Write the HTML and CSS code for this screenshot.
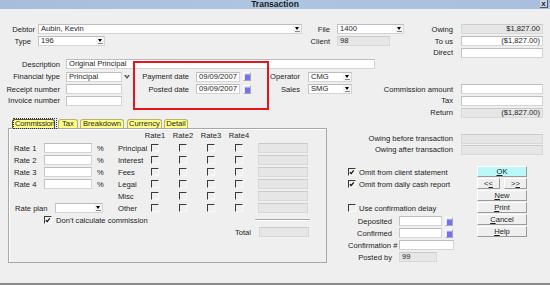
FILE: index.html
```html
<!DOCTYPE html>
<html lang="en">
<head>
  <meta charset="UTF-8">
  <title>Transaction</title>
  <link rel="stylesheet" href="styles.css">
</head>
<body>
<div class="window">

  <!-- Title bar -->
  <div class="titlebar">
    <span class="title">Transaction</span>
    <span class="close">x</span>
  </div>

  <!-- Header fields -->
  <div class="top">
    <div class="row h12">
      <span class="lbl w35">Debtor</span>
      <div class="sel w264 ml3"><span class="val">Aubin, Kevin</span><span class="arr"></span></div>
      <span class="lbl w28">File</span>
      <div class="sel w67 ml7"><span class="val">1400</span><span class="arr"></span></div>
      <span class="lbl w49">Owing</span>
      <div class="fld ro num w82 ml8">$1,827.00</div>
    </div>
    <div class="row h12">
      <span class="lbl w31">Type</span>
      <div class="sel w67 ml7"><span class="val">196</span><span class="arr"></span></div>
      <span class="lbl w225">Client</span>
      <div class="fld ro w53 ml7">98</div>
      <span class="lbl w63">To us</span>
      <div class="fld num w82 ml8">($1,827.00)</div>
    </div>
    <div class="row h11">
      <span class="lbl w453">Direct</span>
      <div class="fld w82 ml8"></div>
    </div>
    <div class="row h12">
      <span class="lbl w60">Description</span>
      <div class="fld w309 ml6">Original Principal</div>
    </div>
    <div class="row h13">
      <span class="lbl w60">Financial type</span>
      <div class="fld w56 ml6">Principal</div>
      <span class="oarr"></span>
      <span class="lbl w57">Payment date</span>
      <div class="fld w44 ml7">09/09/2007</div>
      <span class="cal ml3"></span>
      <span class="lbl w49">Operator</span>
      <div class="sel w44 ml8"><span class="val">CMG</span><span class="arr"></span></div>
    </div>
    <div class="row h12">
      <span class="lbl w60">Receipt number</span>
      <div class="fld w56 ml6"></div>
      <span class="lbl w67">Posted date</span>
      <div class="fld w44 ml7">09/09/2007</div>
      <span class="cal ml3"></span>
      <span class="lbl w49">Sales</span>
      <div class="sel w44 ml8"><span class="val">SMG</span><span class="arr"></span></div>
      <span class="lbl w101">Commission amount</span>
      <div class="fld w82 ml8"></div>
    </div>
    <div class="row h11">
      <span class="lbl w60">Invoice number</span>
      <div class="fld w56 ml6"></div>
      <span class="lbl w331">Tax</span>
      <div class="fld w82 ml8"></div>
    </div>
    <div class="row h13">
      <span class="lbl w453">Return</span>
      <div class="fld ro num w82 ml8">($1,827.00)</div>
    </div>
  </div>

  <div class="lower">
    <!-- Tabbed panel -->
    <div class="tabbox">
      <div class="tabs">
        <span class="tab active t-comm"><span class="focus">Commission</span></span>
        <span class="tab t-tax">Tax</span>
        <span class="tab t-brk">Breakdown</span>
        <span class="tab t-cur">Currency</span>
        <span class="tab t-det">Detail</span>
      </div>
      <div class="panel">
        <div class="hdr">
          <span>Rate1</span><span>Rate2</span><span>Rate3</span><span>Rate4</span>
        </div>
        <div class="prow">
          <div class="pleft"><span class="plbl">Rate 1</span><div class="fld w48"></div><span class="pct">%</span></div>
          <span class="rlbl">Principal</span>
          <span class="cbcell"><span class="cb"></span></span><span class="cbcell"><span class="cb"></span></span><span class="cbcell"><span class="cb"></span></span><span class="cbcell"><span class="cb"></span></span>
          <div class="fld ro w50 ml5"></div>
        </div>
        <div class="prow">
          <div class="pleft"><span class="plbl">Rate 2</span><div class="fld w48"></div><span class="pct">%</span></div>
          <span class="rlbl">Interest</span>
          <span class="cbcell"><span class="cb"></span></span><span class="cbcell"><span class="cb"></span></span><span class="cbcell"><span class="cb"></span></span><span class="cbcell"><span class="cb"></span></span>
          <div class="fld ro w50 ml5"></div>
        </div>
        <div class="prow">
          <div class="pleft"><span class="plbl">Rate 3</span><div class="fld w48"></div><span class="pct">%</span></div>
          <span class="rlbl">Fees</span>
          <span class="cbcell"><span class="cb"></span></span><span class="cbcell"><span class="cb"></span></span><span class="cbcell"><span class="cb"></span></span><span class="cbcell"><span class="cb"></span></span>
          <div class="fld ro w50 ml5"></div>
        </div>
        <div class="prow">
          <div class="pleft"><span class="plbl">Rate 4</span><div class="fld w48"></div><span class="pct">%</span></div>
          <span class="rlbl">Legal</span>
          <span class="cbcell"><span class="cb"></span></span><span class="cbcell"><span class="cb"></span></span><span class="cbcell"><span class="cb"></span></span><span class="cbcell"><span class="cb"></span></span>
          <div class="fld ro w50 ml5"></div>
        </div>
        <div class="prow">
          <div class="pleft"></div>
          <span class="rlbl">Misc</span>
          <span class="cbcell"><span class="cb"></span></span><span class="cbcell"><span class="cb"></span></span><span class="cbcell"><span class="cb"></span></span><span class="cbcell"><span class="cb"></span></span>
          <div class="fld ro w50 ml5"></div>
        </div>
        <div class="prow">
          <div class="pleft plan"><span class="plbl wide">Rate plan</span><div class="sel w48"><span class="val"></span><span class="arr"></span></div></div>
          <span class="rlbl">Other</span>
          <span class="cbcell"><span class="cb"></span></span><span class="cbcell"><span class="cb"></span></span><span class="cbcell"><span class="cb"></span></span><span class="cbcell"><span class="cb"></span></span>
          <div class="fld ro w50 ml5"></div>
        </div>
        <div class="prow nocalc">
          <span class="cb checked"><svg viewBox="0 0 8 8" width="7" height="7"><path d="M1.2 3.6l1.6 2 3.6-4.4" stroke="#000" stroke-width="1.4" fill="none"/></svg></span>
          <span class="cbtext">Don't calculate commission</span>
          <span class="sep"></span>
        </div>
        <div class="prow total">
          <span>Total</span>
          <div class="fld ro w50 ml8"></div>
        </div>
      </div>
    </div>

    <!-- Right side -->
    <div class="side">
      <div class="row h11">
        <span class="lbl w126">Owing before transaction</span>
        <div class="fld ro w82 ml8"></div>
      </div>
      <div class="row h11">
        <span class="lbl w126">Owing after transaction</span>
        <div class="fld ro w82 ml8"></div>
      </div>
      <div class="sbody">
        <div class="opts">
          <div class="row h12">
            <span class="cb checked"><svg viewBox="0 0 8 8" width="7" height="7"><path d="M1.2 3.6l1.6 2 3.6-4.4" stroke="#000" stroke-width="1.4" fill="none"/></svg></span>
            <span class="cbtext">Omit from client statement</span>
          </div>
          <div class="row h12">
            <span class="cb checked"><svg viewBox="0 0 8 8" width="7" height="7"><path d="M1.2 3.6l1.6 2 3.6-4.4" stroke="#000" stroke-width="1.4" fill="none"/></svg></span>
            <span class="cbtext">Omit from daily cash report</span>
          </div>
          <div class="row h12 gap-top">
            <span class="cb"></span>
            <span class="cbtext">Use confirmation delay</span>
          </div>
          <div class="row h12 conf-first">
            <span class="lbl w44">Deposited</span>
            <div class="fld w43 ml7"></div>
            <span class="cal ml3"></span>
          </div>
          <div class="row h12">
            <span class="lbl w44">Confirmed</span>
            <div class="fld w43 ml7"></div>
            <span class="cal ml3"></span>
          </div>
          <div class="row h12">
            <span class="lbl w44">Confirmation #</span>
            <div class="fld w55 ml7"></div>
          </div>
          <div class="row h12">
            <span class="lbl w44">Posted by</span>
            <div class="fld ro w38 ml7">99</div>
          </div>
        </div>
        <div class="btns">
          <button class="btn ok"><u>O</u>K</button>
          <div class="pair">
            <button class="btn half">&lt;<u>&lt;</u></button>
            <button class="btn half">&gt;<u>&gt;</u></button>
          </div>
          <button class="btn"><u>N</u>ew</button>
          <button class="btn"><u>P</u>rint</button>
          <button class="btn"><u>C</u>ancel</button>
          <button class="btn"><u>H</u>elp</button>
        </div>
      </div>
    </div>
  </div>

  <!-- Highlight drawn over the date fields -->
  <div class="highlight"></div>
</div>
</body>
</html>
```

FILE: styles.css
```css
* {
  box-sizing: border-box;
  margin: 0;
  padding: 0;
}

body {
  font-family: "Liberation Sans", Arial, sans-serif;
  font-size: 7.6px;
  color: #1c1c1c;
  background-color: #efefef;
}

.window {
  position: relative;
  width: 550px;
  height: 285px;
  background-color: #efefef;
  border-bottom: 2px solid #8a8a8a;
  overflow: hidden;
}

/* Title bar */
.titlebar {
  position: relative;
  height: 9px;
  background: linear-gradient(90deg, #a6bedb 0%, #aec5e0 45%, #a8c0dd 100%);
  display: flex;
  justify-content: center;
  align-items: center;
}

.title {
  font-weight: bold;
  font-size: 8.5px;
  line-height: 9px;
}

.close {
  position: absolute;
  right: 2px;
  top: 0;
  width: 8px;
  height: 8px;
  font-size: 8px;
  font-weight: bold;
  line-height: 7px;
  text-align: center;
  border-right: 1px solid #555;
  border-bottom: 1px solid #555;
  background-color: #c8d6e8;
}

/* Rows */
.top {
  padding-top: 14px;
}

.row {
  display: flex;
  align-items: center;
}

.h11 { height: 11px; }
.h12 { height: 12px; }
.h13 { height: 13px; }

.lbl {
  flex: none;
  text-align: right;
  white-space: nowrap;
}

.fld {
  flex: none;
  height: 10px;
  background-color: #fff;
  border: 1px solid #d4d4d4;
  border-top-color: #bcbcbc;
  border-left-color: #c4c4c4;
  padding: 0 2px;
  line-height: 8px;
  white-space: nowrap;
  overflow: hidden;
}

.fld.ro {
  background-color: #e6e6e6;
  border-color: #d8d8d8;
  border-top-color: #cacaca;
}

.num {
  text-align: right;
}

.sel {
  flex: none;
  display: flex;
  height: 10px;
  background-color: #fff;
  border: 1px solid #d4d4d4;
  border-top-color: #bcbcbc;
  border-left-color: #c4c4c4;
  line-height: 8px;
}

.sel .val {
  flex: 1;
  padding: 0 2px;
  white-space: nowrap;
  overflow: hidden;
}

.arr {
  position: relative;
  width: 9px;
  height: 8px;
  background-color: #f4f4f4;
  border-left: 1px solid #fff;
}

.arr::before {
  content: "";
  position: absolute;
  left: 2px;
  top: 2px;
  border-left: 2.5px solid transparent;
  border-right: 2.5px solid transparent;
  border-top: 3px solid #000;
}

.arr::after {
  content: "";
  position: absolute;
  left: 2px;
  top: 6px;
  width: 5px;
  height: 1px;
  background-color: #888;
}

.oarr {
  flex: none;
  position: relative;
  width: 10px;
  height: 8px;
}

.oarr::before {
  content: "";
  position: absolute;
  left: 2px;
  top: 2px;
  border-left: 3px solid transparent;
  border-right: 3px solid transparent;
  border-top: 4px solid #555;
}

.oarr::after {
  content: "";
  position: absolute;
  left: 3.5px;
  top: 2.6px;
  border-left: 1.5px solid transparent;
  border-right: 1.5px solid transparent;
  border-top: 2px solid #efefef;
}

.cal {
  flex: none;
  width: 8px;
  height: 9px;
  background-color: #e4e4e4;
  border: 1px solid #fff;
  border-right-color: #a8a8a8;
  border-bottom-color: #a8a8a8;
  padding: 1px 0 0 1px;
}

.cal::before {
  content: "";
  display: block;
  width: 5px;
  height: 5px;
  background-color: #7272f0;
  border-top: 1px solid #a8a8ff;
}

/* Widths and gaps */
.w28 { width: 28px; }
.w31 { width: 31px; }
.w35 { width: 35px; }
.w38 { width: 38px; }
.w43 { width: 43px; }
.w44 { width: 44px; }
.w48 { width: 48px; }
.w49 { width: 49px; }
.w50 { width: 50px; }
.w53 { width: 53px; }
.w55 { width: 55px; }
.w56 { width: 56px; }
.w57 { width: 57px; }
.w60 { width: 60px; }
.w63 { width: 63px; }
.w67 { width: 67px; }
.w82 { width: 82px; }
.w101 { width: 101px; }
.w126 { width: 126px; }
.w225 { width: 225px; }
.w264 { width: 264px; }
.w309 { width: 309px; }
.w331 { width: 331px; }
.w453 { width: 453px; }

.ml3 { margin-left: 3px; }
.ml5 { margin-left: 5px; }
.ml6 { margin-left: 6px; }
.ml7 { margin-left: 7px; }
.ml8 { margin-left: 8px; }

/* Lower half */
.lower {
  display: flex;
}

.tabbox {
  margin-left: 8px;
  width: 319px;
}

.tabs {
  display: flex;
  align-items: flex-end;
  height: 9px;
  padding-left: 4px;
}

.tab {
  height: 9px;
  line-height: 8px;
  text-align: center;
  white-space: nowrap;
  background-color: #ffff88;
  border: 1px solid #b4b46a;
  border-bottom: none;
  border-radius: 3px 3px 0 0;
}

.tab.active {
  border-color: #505050;
}

.focus {
  border: 1px dotted #333;
  padding: 0 1px;
  letter-spacing: -0.2px;
}

.t-comm { width: 43px; }
.t-tax { width: 20px; margin-left: 3px; }
.t-brk { width: 44px; margin-left: 2px; }
.t-cur { width: 35px; margin-left: 3px; }
.t-det { width: 24px; margin-left: 2px; }

.panel {
  height: 135px;
  border: 1px solid #a8a8a8;
  box-shadow: inset 1px 1px 0 #fff;
}

.hdr {
  display: flex;
  height: 11px;
  align-items: flex-end;
  padding-left: 132px;
  margin-bottom: 2px;
}

.hdr span {
  width: 28px;
  text-align: center;
}

.prow {
  display: flex;
  align-items: center;
  height: 12px;
}

.pleft {
  display: flex;
  align-items: center;
  width: 109px;
  padding-left: 5px;
}

.pleft.plan {
  padding-left: 6px;
}

.plbl {
  width: 30px;
}

.plbl.wide {
  width: 40px;
}

.pct {
  margin-left: 5px;
}

.rlbl {
  width: 23px;
  white-space: nowrap;
}

.cbcell {
  width: 28px;
  display: flex;
  justify-content: center;
}

.cb {
  flex: none;
  display: flex;
  align-items: center;
  justify-content: center;
  width: 8px;
  height: 8px;
  border-top: 1px solid #3a3a3a;
  border-left: 1px solid #3a3a3a;
  border-right: 1px solid #fafafa;
  border-bottom: 1px solid #fafafa;
}

.cbtext {
  margin-left: 3px;
  white-space: nowrap;
}

.nocalc {
  padding-left: 35px;
}

.nocalc .cbtext {
  margin-left: 4px;
}

.sep {
  margin-left: auto;
  margin-right: 16px;
  width: 55px;
  height: 2px;
  border-top: 1px solid #a8a8a8;
  border-bottom: 1px solid #fff;
}

.total {
  justify-content: flex-end;
  padding-right: 17px;
}

/* Right side */
.side {
  width: 223px;
  padding-top: 14px;
}

.sbody {
  display: flex;
  margin-top: 11px;
}

.opts {
  width: 150px;
  padding-left: 21px;
}

.gap-top {
  margin-top: 12px;
}

.conf-first {
  margin-top: 1px;
}

.btns {
  width: 50px;
  display: flex;
  flex-direction: column;
  gap: 1px;
}

.pair {
  display: flex;
  justify-content: space-between;
}

.btn {
  height: 11px;
  width: 50px;
  font-family: inherit;
  font-size: 7.6px;
  line-height: 9px;
  color: #1c1c1c;
  background-color: #efefef;
  border: 1px solid #fff;
  border-right-color: #9a9a9a;
  border-bottom-color: #9a9a9a;
  cursor: pointer;
}

.btn.ok {
  background-color: #baf8fa;
}

.btn.half {
  width: 23px;
}

/* Red annotation box over the date fields */
.highlight {
  position: absolute;
  left: 133px;
  top: 61px;
  width: 136px;
  height: 49px;
  border: 2px solid #e8141b;
}
```
